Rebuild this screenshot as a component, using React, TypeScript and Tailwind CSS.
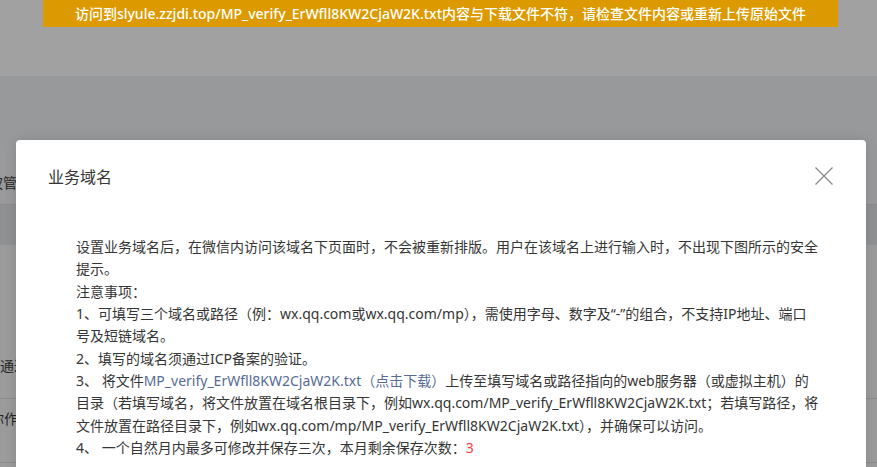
import React from "react";

const FILE = "MP_verify_ErWfll8KW2CjaW2K.txt";

export default function App() {
  return (
    <div
      className="relative w-[877px] h-[467px] overflow-hidden bg-[#98999b]"
      style={{ fontFamily: '"Noto Sans", "Noto Sans CJK SC", sans-serif' }}
    >
      {/* dimmed page behind the overlay */}
      <div className="flex flex-col">
        <div className="h-[76px] bg-[#a1a1a1]" />
        <div className="h-[84px] bg-[#98999b]" />
        <div className="h-[45px] flex items-start border-b border-[#8a8a8c] bg-[#99999b]">
          <span className="ml-[-25px] mt-[12px] text-[14px] leading-[22px] text-[#262626] whitespace-nowrap">授权管理</span>
        </div>
        <div className="h-[40px] bg-[#8f9092]" />
        <div className="h-[154px] flex items-end border-b border-[#8a8a8c] bg-[#9b9b9b]">
          <span className="mb-[21px] text-[14px] leading-[22px] text-[#262626] whitespace-nowrap">通过验证</span>
        </div>
        <div className="h-[64px] flex items-start border-b border-[#8a8a8c] bg-[#9b9b9b]">
          <span className="ml-[-10px] mt-[9px] text-[14px] leading-[22px] text-[#262626] whitespace-nowrap">你作</span>
        </div>
        <div className="h-[20px] bg-[#9b9b9b]" />
      </div>

      {/* toast banner */}
      <div className="absolute left-[43px] top-0 w-[795px] h-[27px] bg-[#dd9a00] flex items-center justify-center">
        <span className="text-white text-[14px] font-medium whitespace-nowrap">
          访问到slyule.zzjdi.top/{FILE}内容与下载文件不符，请检查文件内容或重新上传原始文件
        </span>
      </div>

      {/* dialog */}
      <div className="absolute left-[16px] top-[140px] w-[850px] h-[340px] bg-white rounded-t-[4px] shadow-[0_0_12px_rgba(0,0,0,0.12)]">
        <div className="flex items-start justify-between pl-[32px] pr-[33px] pt-[25px]">
          <h2 className="text-[16px] leading-[24px] text-[#353535] font-normal">业务域名</h2>
          <svg width="18" height="18" viewBox="0 0 18 18" className="mt-[2px]">
            <path d="M0.5 0.5 L17.5 17.5 M17.5 0.5 L0.5 17.5" stroke="#8c8c8c" strokeWidth="1.4" fill="none" />
          </svg>
        </div>
        <div className="pl-[60px] pt-[47px] text-[14px] leading-[22.35px] text-[#353535] whitespace-nowrap">
          <div>设置业务域名后，在微信内访问该域名下页面时，不会被重新排版。用户在该域名上进行输入时，不出现下图所示的安全</div>
          <div>提示。</div>
          <div>注意事项：</div>
          <div>1、可填写三个域名或路径（例：wx.qq.com或wx.qq.com/mp），需使用字母、数字及“-”的组合，不支持IP地址、端口</div>
          <div>号及短链域名。</div>
          <div>2、填写的域名须通过ICP备案的验证。</div>
          <div>
            3、 将文件<a className="text-[#576b95] cursor-pointer">{FILE}（点击下载）</a>上传至填写域名或路径指向的web服务器（或虚拟主机）的
          </div>
          <div>目录（若填写域名，将文件放置在域名根目录下，例如wx.qq.com/{FILE}；若填写路径，将</div>
          <div>文件放置在路径目录下，例如wx.qq.com/mp/{FILE}），并确保可以访问。</div>
          <div>
            4、 一个自然月内最多可修改并保存三次，本月剩余保存次数：<span className="text-[#fa3c3c]">3</span>
          </div>
        </div>
      </div>
    </div>
  );
}
